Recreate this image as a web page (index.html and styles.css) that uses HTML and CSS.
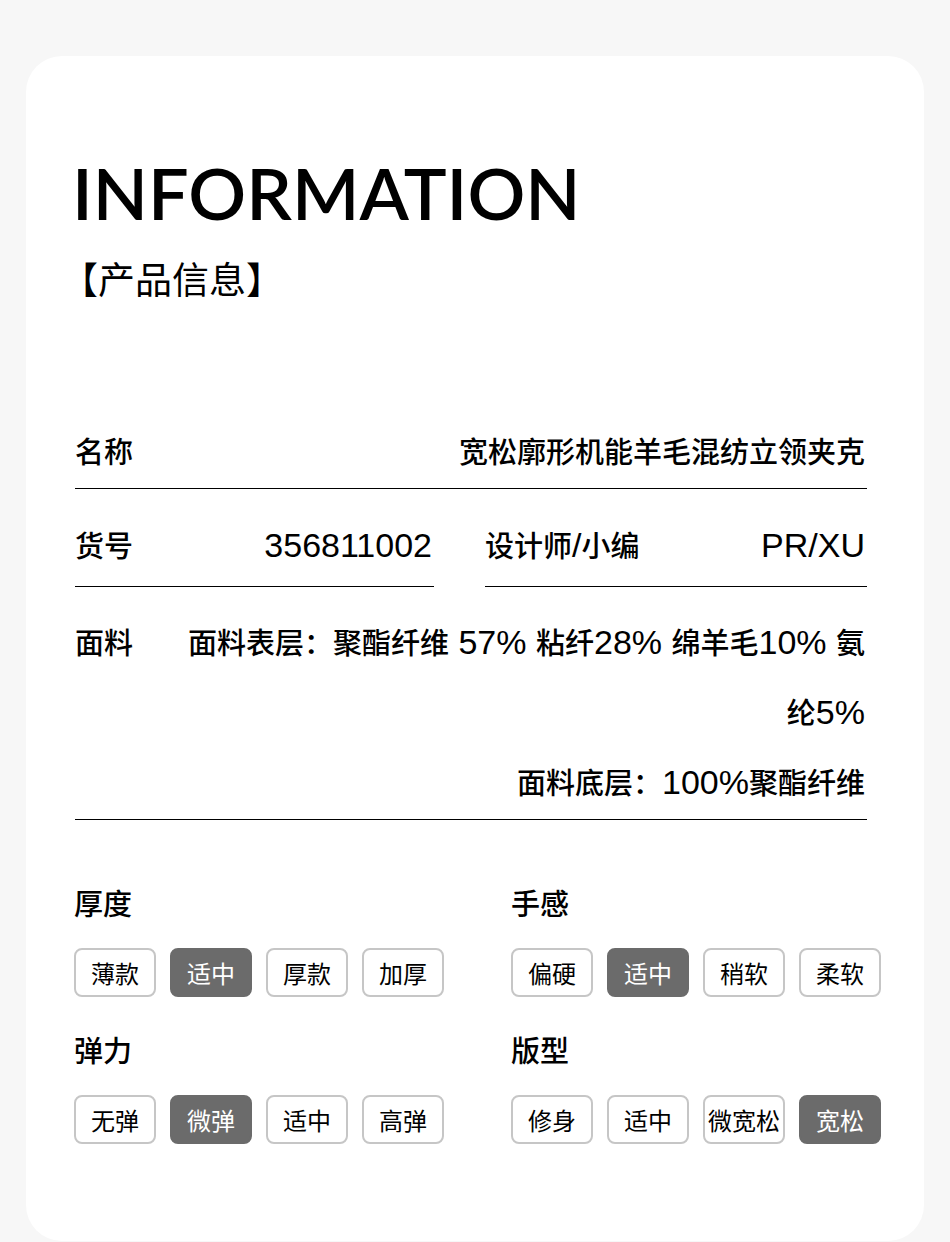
FILE: index.html
```html
<!DOCTYPE html>
<html lang="zh-CN">
<head>
<meta charset="utf-8">
<title>INFORMATION</title>
<link rel="stylesheet" href="styles.css">
</head>
<body>
<main class="card">
  <header class="head">
    <h1 class="title">INFORMATION</h1>
    <p class="subtitle">【产品信息】</p>
  </header>

  <section class="info">
    <div class="row row-name">
      <span class="label">名称</span>
      <span class="value">宽松廓形机能羊毛混纺立领夹克</span>
    </div>
    <div class="row-split">
      <div class="row row-code">
        <span class="label">货号</span>
        <span class="value en">356811002</span>
      </div>
      <div class="row row-code">
        <span class="label">设计师<span class="en">/</span>小编</span>
        <span class="value en">PR/XU</span>
      </div>
    </div>
    <div class="row row-fabric">
      <span class="label">面料</span>
      <div class="value fabric">
        <p>面料表层：聚酯纤维<span class="en"> 57% </span>粘纤<span class="en">28% </span>绵羊毛<span class="en">10% </span>氨<br>纶<span class="en">5%</span></p>
        <p>面料底层：<span class="en">100%</span>聚酯纤维</p>
      </div>
    </div>
  </section>

  <section class="attrs">
    <div class="group">
      <h2 class="group-label">厚度</h2>
      <div class="tags">
        <span class="tag">薄款</span>
        <span class="tag on">适中</span>
        <span class="tag">厚款</span>
        <span class="tag">加厚</span>
      </div>
    </div>
    <div class="group">
      <h2 class="group-label">手感</h2>
      <div class="tags">
        <span class="tag">偏硬</span>
        <span class="tag on">适中</span>
        <span class="tag">稍软</span>
        <span class="tag">柔软</span>
      </div>
    </div>
    <div class="group">
      <h2 class="group-label">弹力</h2>
      <div class="tags">
        <span class="tag">无弹</span>
        <span class="tag on">微弹</span>
        <span class="tag">适中</span>
        <span class="tag">高弹</span>
      </div>
    </div>
    <div class="group">
      <h2 class="group-label">版型</h2>
      <div class="tags">
        <span class="tag">修身</span>
        <span class="tag">适中</span>
        <span class="tag">微宽松</span>
        <span class="tag on">宽松</span>
      </div>
    </div>
  </section>
</main>
</body>
</html>
```

FILE: styles.css
```css
html, body {
  margin: 0;
  padding: 0;
}

body {
  background: #f7f7f7;
  color: #000;
  font-family: "Liberation Sans", "Noto Sans CJK SC", sans-serif;
  padding-top: 56px;
}

.card {
  margin: 0 26px;
  background: #fff;
  border-radius: 36px;
  padding: 96px 57px 97px 49px;
}

.title {
  margin: 0 0 0 -3px;
  font-family: Lato, "Liberation Sans", sans-serif;
  font-weight: 600;
  font-size: 72px;
  line-height: 80px;
}

.subtitle {
  margin: 21px 0 0 -14px;
  font-family: "Noto Sans CJK SC", sans-serif;
  font-weight: 400;
  font-size: 37px;
  line-height: 50px;
}

.info {
  margin-top: 115px;
}

.row {
  display: flex;
  justify-content: space-between;
  align-items: baseline;
  border-bottom: 1px solid #000;
  font-size: 29px;
  font-weight: 500;
  line-height: 70px;
  padding-right: 2px;
}

.en {
  font-size: 34px;
  line-height: 1;
}

.row-split {
  display: grid;
  grid-template-columns: 359px 1fr;
  column-gap: 51px;
}

.row-code {
  padding-top: 23px;
  padding-bottom: 4px;
}

.row-fabric {
  padding-top: 22px;
}

.label {
  flex: none;
}

.fabric {
  flex: 1;
  text-align: right;
  padding-left: 47px;
}

.fabric p {
  margin: 0;
}

.attrs {
  display: grid;
  grid-template-columns: 437px 1fr;
  row-gap: 33px;
  margin: 63px 0 0 -1px;
}

.group-label {
  margin: 0 0 23px;
  padding-top: 2px;
  font-weight: 500;
  font-size: 29px;
  line-height: 40px;
}

.tags {
  display: flex;
  gap: 14px;
}

.tag {
  box-sizing: border-box;
  width: 82px;
  height: 49px;
  border: 2px solid #c6c6c6;
  border-radius: 8px;
  display: flex;
  align-items: center;
  justify-content: center;
  font-size: 24px;
  white-space: nowrap;
}

.tag.on {
  background: #6b6b6b;
  border-color: #6b6b6b;
  color: #fff;
}
```
